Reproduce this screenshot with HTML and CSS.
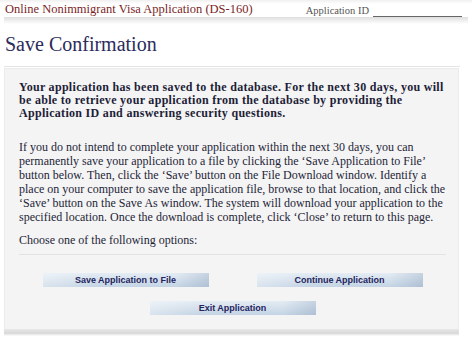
FILE: index.html
```html
<!doctype html>
<html lang="en">

<head>
  <meta charset="UTF-8" />
  <title>Save Confirmation</title>
  <link rel="stylesheet" href="styles.css">
</head>

<body>
  <div class="top-bar">
    <span class="app-title">Online Nonimmigrant Visa Application (DS-160)</span>
    <span class="app-id">Application ID <span class="app-id-line"></span></span>
  </div>
  <div class="top-shade"></div>

  <h1>Save Confirmation</h1>
  <div class="rule"></div>

  <div class="panel">
    <p class="notice">Your application has been saved to the database. For the next 30 days, you will be able to retrieve your application from the database by providing the Application ID and answering security questions.</p>

    <p class="info">If you do not intend to complete your application within the next 30 days, you can permanently save your application to a file by clicking the ‘Save Application to File’ button below. Then, click the ‘Save’ button on the File Download window. Identify a place on your computer to save the application file, browse to that location, and click the ‘Save’ button on the Save As window. The system will download your application to the specified location. Once the download is complete, click ‘Close’ to return to this page.</p>

    <p class="choose">Choose one of the following options:</p>
    <div class="panel-rule"></div>

    <div class="btn-row">
      <button type="button">Save Application to File</button>
      <button type="button">Continue Application</button>
    </div>
    <div class="btn-row">
      <button type="button">Exit Application</button>
    </div>
  </div>
  <div class="panel-shade"></div>
</body>

</html>
```

FILE: styles.css
```css
body {
  font-family: "Liberation Serif", "Times New Roman", serif;
  background: #fff;
  color: #1e1e38;
  margin: 0;
  width: 472px;
}

.top-bar {
  display: flex;
  justify-content: space-between;
  align-items: flex-end;
  height: 17px;
  padding: 0 10px 0 5px;
  background: linear-gradient(#f0f0f0, #fff 4px);
}

.app-title {
  font-size: 12.5px;
  color: #7a1f1f;
  line-height: 15px;
}

.app-id {
  display: flex;
  align-items: flex-end;
  font-size: 10.5px;
  color: #555;
  line-height: 12px;
}

.app-id-line {
  display: inline-block;
  width: 89px;
  margin-left: 4px;
  border-bottom: 1px solid #666;
}

.top-shade {
  height: 7px;
  margin: 0 4px;
  background: linear-gradient(#dedede, #fff);
}

h1 {
  font-weight: normal;
  font-size: 20px;
  line-height: 24px;
  color: #2b2b5c;
  margin: 8px 0 0 5px;
}

.rule {
  height: 1px;
  margin: 10px 12px 0 4px;
  background: #e4e4e4;
}

.panel {
  margin: 1px 13px 0 4px;
  padding: 12px 8px 14px 14px;
  background: #f4f4f4;
  border: 1px solid #ebebeb;
  border-bottom: none;
}

.notice {
  font-weight: bold;
  font-size: 12px;
  letter-spacing: 0.3px;
  line-height: 12.8px;
  margin: 0;
}

.info {
  font-size: 12px;
  line-height: 14px;
  margin: 21px 0 0;
}

.choose {
  font-size: 12px;
  line-height: 14px;
  margin: 9px 0 0;
}

.panel-rule {
  height: 1px;
  background: #e2e2e2;
  margin: 7px 4px 0 0;
}

.btn-row {
  display: flex;
  justify-content: center;
  gap: 48px;
  margin-top: 18px;
  padding-right: 4px;
}

.btn-row + .btn-row {
  margin-top: 14px;
}

button {
  width: 166px;
  height: 14px;
  padding: 0;
  border: none;
  font-family: "Liberation Sans", Arial, sans-serif;
  font-weight: bold;
  font-size: 9px;
  color: #24245e;
  background:
    linear-gradient(to right, rgba(255, 255, 255, 0.35), rgba(255, 255, 255, 0) 30%, rgba(70, 100, 140, 0) 80%, rgba(70, 100, 140, 0.18)),
    linear-gradient(#e4ecf4, #c4d4e4);
  cursor: pointer;
}

.panel-shade {
  height: 7px;
  margin: 0 13px 0 4px;
  background: linear-gradient(#e8e8e8, #d8d8d8 60%, #fff);
}
```
